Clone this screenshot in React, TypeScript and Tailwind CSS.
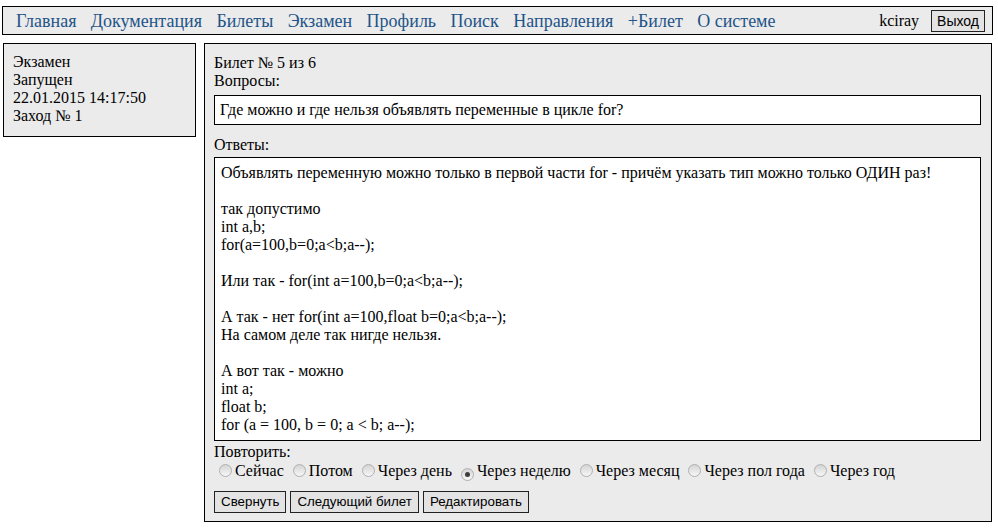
const navLinks = ['Главная', 'Документация', 'Билеты', 'Экзамен', 'Профиль', 'Поиск', 'Направления', '+Билет', 'О системе'];

const answer = [
  'Объявлять переменную можно только в первой части for - причём указать тип можно только ОДИН раз!',
  '',
  'так допустимо',
  'int a,b;',
  'for(a=100,b=0;a<b;a--);',
  '',
  'Или так - for(int a=100,b=0;a<b;a--);',
  '',
  'А так - нет for(int a=100,float b=0;a<b;a--);',
  'На самом деле так нигде нельзя.',
  '',
  'А вот так - можно',
  'int a;',
  'float b;',
  'for (a = 100, b = 0; a < b; a--);',
];

const repeats = ['Сейчас', 'Потом', 'Через день', 'Через неделю', 'Через месяц', 'Через пол года', 'Через год'];

function Radio({ checked }: { checked?: boolean }) {
  return (
    <span className="ml-[5px] mr-[3px] inline-flex h-[13px] w-[13px] items-center justify-center rounded-full border border-[#b0b0b0] bg-gradient-to-b from-[#d4d4d4] to-[#f7f7f7] align-[-1px]">
      {checked && <span className="h-[5px] w-[5px] rounded-full bg-[#3c3c3c]" />}
    </span>
  );
}

function Btn({ children }: { children: string }) {
  return (
    <button className="h-[22px] border border-[#222] bg-[#e3e3e3] px-[6px] font-['Liberation_Sans',Arial,sans-serif] text-[13.33px] leading-none text-black">
      {children}
    </button>
  );
}

export default function App() {
  return (
    <div className="min-h-[528px] w-[998px] bg-white pt-[6px] font-['Liberation_Serif','Times_New_Roman',serif] text-[16px] leading-[18px] text-black">
      {/* Top menu */}
      <nav className="ml-[2px] flex h-[29px] w-[991px] items-center border border-black bg-[#ebebeb] pl-[13px] pr-[7px]">
        <div className="flex gap-[14.4px] text-[18px] text-[#1e5488]">
          {navLinks.map((l) => (
            <a key={l} className="cursor-pointer">{l}</a>
          ))}
        </div>
        <span className="ml-auto mr-[12px]">kciray</span>
        <button className="h-[22px] border border-[#222] bg-[#e3e3e3] px-[5px] font-['Liberation_Sans',Arial,sans-serif] text-[14px] leading-none">
          Выход
        </button>
      </nav>

      <div className="mt-[8px] flex items-start">
        {/* Exam info */}
        <div className="ml-[3px] w-[193px] border border-black bg-[#ebebeb] pb-[11px] pl-[9px] pt-[9px]">
          <div>Экзамен</div>
          <div>Запущен</div>
          <div>22.01.2015 14:17:50</div>
          <div>Заход № 1</div>
        </div>

        {/* Ticket */}
        <div className="ml-[8px] w-[788px] border border-black bg-[#ebebeb] pb-[8px] pl-[9px] pr-[10px] pt-[10px]">
          <div>Билет № 5 из 6</div>
          <div>Вопросы:</div>
          <div className="mt-[5px] border border-black bg-white px-[5px] py-[5px]">
            Где можно и где нельзя объявлять переменные в цикле for?
          </div>
          <div className="mt-[11px]">Ответы:</div>
          <div className="mt-[3px] h-[284px] overflow-hidden border border-black bg-white px-[6px] pt-[6px]">
            {answer.map((line, i) => (
              <div key={i} className="h-[18px] whitespace-pre">{line}</div>
            ))}
          </div>
          <div className="mt-[2px]">Повторить:</div>
          <div className="mt-[1px] whitespace-nowrap">
            {repeats.map((r) => (
              <span key={r}>
                <Radio checked={r === 'Через неделю'} />
                {r}{' '}
              </span>
            ))}
          </div>
          <div className="mt-[10px] flex gap-[4px]">
            <Btn>Свернуть</Btn>
            <Btn>Следующий билет</Btn>
            <Btn>Редактировать</Btn>
          </div>
        </div>
      </div>
    </div>
  );
}
